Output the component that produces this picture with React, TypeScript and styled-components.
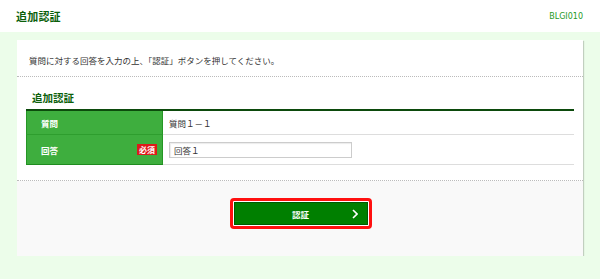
import React from "react";
import styled, { createGlobalStyle } from "styled-components";

const Global = createGlobalStyle`
  html, body { margin: 0; padding: 0; }
  body {
    background: #ecfdea;
    font-family: "Noto Sans CJK JP", "Noto Sans", sans-serif;
    color: #333;
  }
`;

const Header = styled.header`
  height: 32px;
  background: #fff;
  display: flex;
  align-items: center;
  justify-content: space-between;
  padding: 0 17px 0 16px;
  box-sizing: border-box;
`;

const PageTitle = styled.h1`
  margin: 0;
  font-size: 11px;
  font-weight: bold;
  color: #0b5f0b;
  letter-spacing: 0.2px;
`;

const ScreenId = styled.span`
  font-family: "DejaVu Sans", sans-serif;
  font-size: 8px;
  color: #1f9a1f;
`;

const Main = styled.main`
  padding: 8px 17px 0 17px;
`;

const Card = styled.section`
  background: #fff;
  height: 216px;
  box-shadow: 1px 1px 1px rgba(0, 0, 0, 0.18);
  display: flex;
  flex-direction: column;
`;

const Intro = styled.div`
  height: 37px;
  box-sizing: border-box;
  padding: 14px 0 0 12px;
  font-size: 8.5px;
  color: #333;
  border-bottom: 1px dotted #bbb;
`;

const Body = styled.div`
  height: 104px;
  box-sizing: border-box;
  padding: 13px 9px 0 9px;
  border-bottom: 1px dotted #bbb;
`;

const SectionTitle = styled.h2`
  margin: 0 0 3px 6px;
  font-size: 10.5px;
  font-weight: bold;
  color: #0b5f0b;
  line-height: 16px;
`;

const Table = styled.div`
  border-top: 2px solid #0c4a0c;
  display: grid;
  grid-template-columns: 137px 1fr;
`;

const Label = styled.div<{ $last?: boolean }>`
  background: #3eae3e;
  border-left: 1px solid #259625;
  border-right: 1px solid #259625;
  border-bottom: 1px solid ${(p) => (p.$last ? "#1f8c1f" : "#2e9e2e")};
  height: ${(p) => (p.$last ? "30px" : "24px")};
  box-sizing: border-box;
  display: flex;
  align-items: center;
  justify-content: space-between;
  padding: 0 5px 0 14px;
  color: #fff;
  font-size: 8.5px;
  font-weight: bold;
`;

const Required = styled.span`
  background: #dd1a1a;
  color: #fff;
  font-size: 8px;
  font-weight: bold;
  padding: 0 2px;
  line-height: 11px;
  height: 11px;
`;

const Value = styled.div<{ $last?: boolean }>`
  border-bottom: 1px solid #ddd;
  height: ${(p) => (p.$last ? "30px" : "24px")};
  box-sizing: border-box;
  display: flex;
  align-items: center;
  padding-left: 6px;
  font-size: 8.5px;
  color: #333;
`;

const Input = styled.input`
  width: 183px;
  height: 16px;
  box-sizing: border-box;
  border: 1px solid #ccc;
  box-shadow: inset 1px 1px 1px rgba(0, 0, 0, 0.08);
  font-family: "Noto Sans CJK JP", sans-serif;
  font-size: 8.5px;
  color: #333;
  padding: 0 0 0 4px;
  outline: none;
`;

const Footer = styled.div`
  flex: 1;
  background: #f9f9f9;
  display: flex;
  justify-content: center;
  padding-top: 17px;
  padding-left: 1px;
`;

const Focus = styled.div`
  width: 142px;
  height: 31px;
  box-sizing: border-box;
  border: 3px solid #ff1010;
  border-radius: 4px;
  padding: 1px;
  background: #fff;
`;

const Button = styled.button`
  width: 100%;
  height: 100%;
  box-sizing: border-box;
  background: #007f00;
  border: 1px solid #005a00;
  color: #fff;
  font-family: "Noto Sans CJK JP", sans-serif;
  font-size: 8.5px;
  font-weight: bold;
  position: relative;
  display: flex;
  align-items: center;
  justify-content: center;
  padding: 0;
  cursor: pointer;
`;

const Chevron = styled.svg`
  position: absolute;
  right: 9px;
  top: 50%;
  transform: translateY(-50%);
`;

export default function App() {
  return (
    <>
      <Global />
      <Header>
        <PageTitle>追加認証</PageTitle>
        <ScreenId>BLGI010</ScreenId>
      </Header>
      <Main>
        <Card>
          <Intro>質問に対する回答を入力の上、「認証」ボタンを押してください。</Intro>
          <Body>
            <SectionTitle>追加認証</SectionTitle>
            <Table>
              <Label>質問</Label>
              <Value>質問１－１</Value>
              <Label $last>
                回答<Required>必須</Required>
              </Label>
              <Value $last>
                <Input defaultValue="回答１" />
              </Value>
            </Table>
          </Body>
          <Footer>
            <Focus>
              <Button>
                認証
                <Chevron width="6" height="10" viewBox="0 0 6 10">
                  <path d="M1 1 L5 5 L1 9" fill="none" stroke="#fff" strokeWidth="1.6" />
                </Chevron>
              </Button>
            </Focus>
          </Footer>
        </Card>
      </Main>
    </>
  );
}
